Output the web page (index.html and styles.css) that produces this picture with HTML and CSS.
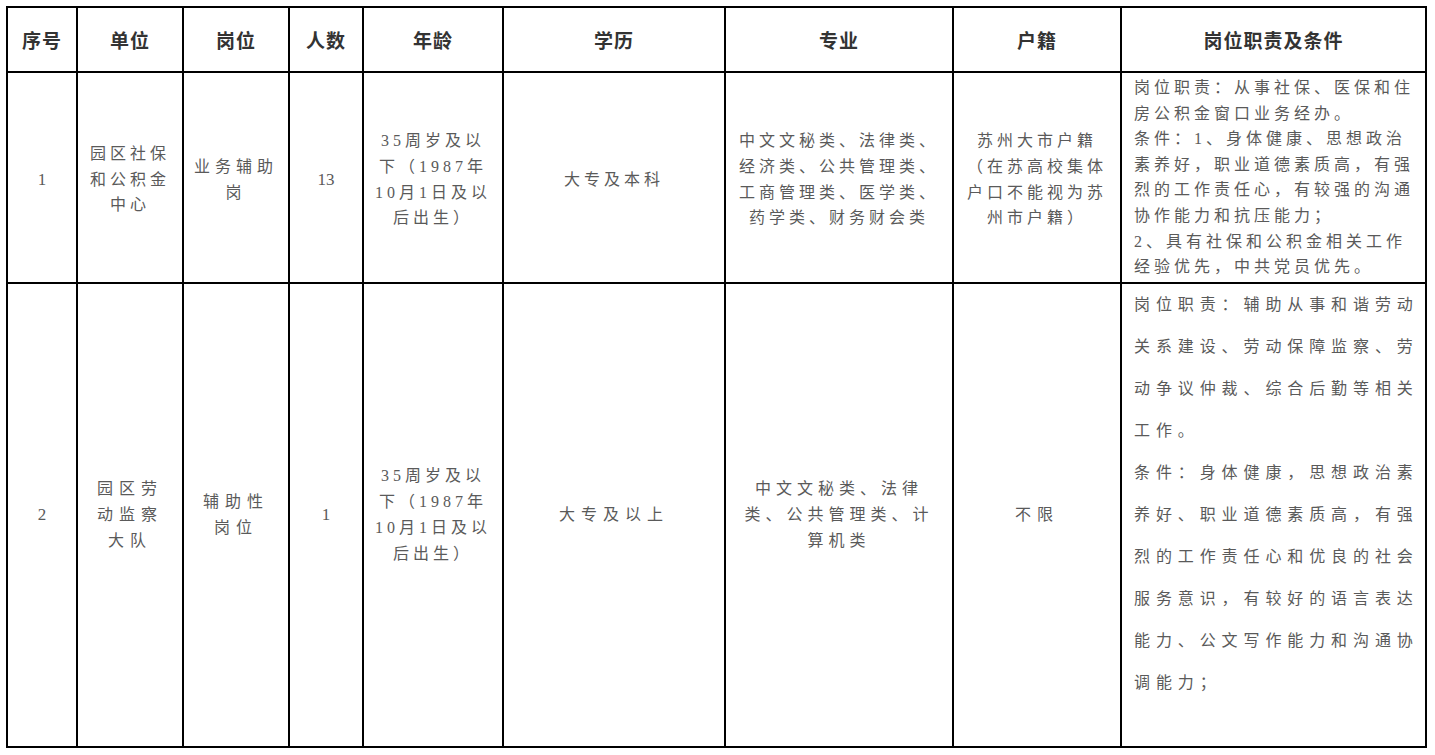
FILE: index.html
```html
<!DOCTYPE html>
<html lang="zh-CN">
<head>
<meta charset="utf-8">
<title>岗位表</title>
<link rel="stylesheet" href="styles.css">
</head>
<body>
<table class="jobs">
  <colgroup>
    <col class="c-no">
    <col class="c-unit">
    <col class="c-post">
    <col class="c-num">
    <col class="c-age">
    <col class="c-edu">
    <col class="c-major">
    <col class="c-hukou">
    <col class="c-duty">
  </colgroup>
  <thead>
    <tr class="head">
      <th>序号</th>
      <th>单位</th>
      <th>岗位</th>
      <th>人数</th>
      <th>年龄</th>
      <th>学历</th>
      <th>专业</th>
      <th>户籍</th>
      <th>岗位职责及条件</th>
    </tr>
  </thead>
  <tbody>
    <tr class="row1">
      <td class="num">1</td>
      <td>园区社保<br>和公积金<br>中心</td>
      <td class="wide">业务辅助<br>岗</td>
      <td class="num">13</td>
      <td>35周岁及以<br>下（1987年<br>10月1日及以<br>后出生）</td>
      <td>大专及本科</td>
      <td>中文文秘类、法律类、<br>经济类、公共管理类、<br>工商管理类、医学类、<br>药学类、财务财会类</td>
      <td>苏州大市户籍<br>（在苏高校集体<br>户口不能视为苏<br>州市户籍）</td>
      <td class="duty">岗位职责：从事社保、医保和住<br>房公积金窗口业务经办。<br>条件：1、身体健康、思想政治<br>素养好，职业道德素质高，有强<br>烈的工作责任心，有较强的沟通<br>协作能力和抗压能力；<br>2、具有社保和公积金相关工作<br>经验优先，中共党员优先。</td>
    </tr>
    <tr class="row2">
      <td class="num">2</td>
      <td>园区劳<br>动监察<br>大队</td>
      <td>辅助性<br>岗位</td>
      <td class="num">1</td>
      <td class="age">35周岁及以<br>下（1987年<br>10月1日及以<br>后出生）</td>
      <td>大专及以上</td>
      <td class="mid">中文文秘类、法律<br>类、公共管理类、计<br>算机类</td>
      <td>不限</td>
      <td class="duty">岗位职责：辅助从事和谐劳动<br>关系建设、劳动保障监察、劳<br>动争议仲裁、综合后勤等相关<br>工作。<br>条件：身体健康，思想政治素<br>养好、职业道德素质高，有强<br>烈的工作责任心和优良的社会<br>服务意识，有较好的语言表达<br>能力、公文写作能力和沟通协<br>调能力；</td>
    </tr>
  </tbody>
</table>
</body>
</html>
```
FILE: styles.css
```css
html, body {
  background: #ffffff;
}

body {
  margin: 6px;
}

.jobs {
  border-collapse: collapse;
  table-layout: fixed;
  width: 1421px;
  font-family: "Liberation Serif", "Noto Sans CJK SC", serif;
}

.c-no { width: 70px; }
.c-unit { width: 106px; }
.c-post { width: 106px; }
.c-num { width: 74px; }
.c-age { width: 140px; }
.c-edu { width: 222px; }
.c-major { width: 228px; }
.c-hukou { width: 168px; }
.c-duty { width: 305px; }

.jobs th,
.jobs td {
  border: 2px solid #000000;
  padding: 0 4px;
  text-align: center;
  vertical-align: middle;
  white-space: nowrap;
}

.jobs th {
  font-family: "Noto Sans CJK SC", sans-serif;
  font-size: 19px;
  font-weight: 700;
  color: #333333;
  letter-spacing: 1px;
}

.head {
  height: 65px;
}

.jobs td {
  font-size: 16px;
  color: #5a5a5a;
}

.row1 {
  height: 211px;
}

.row1 td {
  line-height: 25.6px;
  letter-spacing: 4px;
  padding-top: 4px;
}

.row1 td.wide {
  letter-spacing: 5px;
}

.row2 {
  height: 464px;
}

.row2 td {
  line-height: 26px;
  letter-spacing: 6px;
}

.row2 td.age {
  letter-spacing: 4px;
}

.row2 td.mid {
  letter-spacing: 5px;
}

.jobs td.num {
  letter-spacing: 0;
  font-size: 17px;
}

.jobs td.duty {
  text-align: left;
  vertical-align: top;
  padding: 2px 0 0 12px;
}

.row2 td.duty {
  padding-top: 0;
  line-height: 42px;
  letter-spacing: 5.9px;
}
```
